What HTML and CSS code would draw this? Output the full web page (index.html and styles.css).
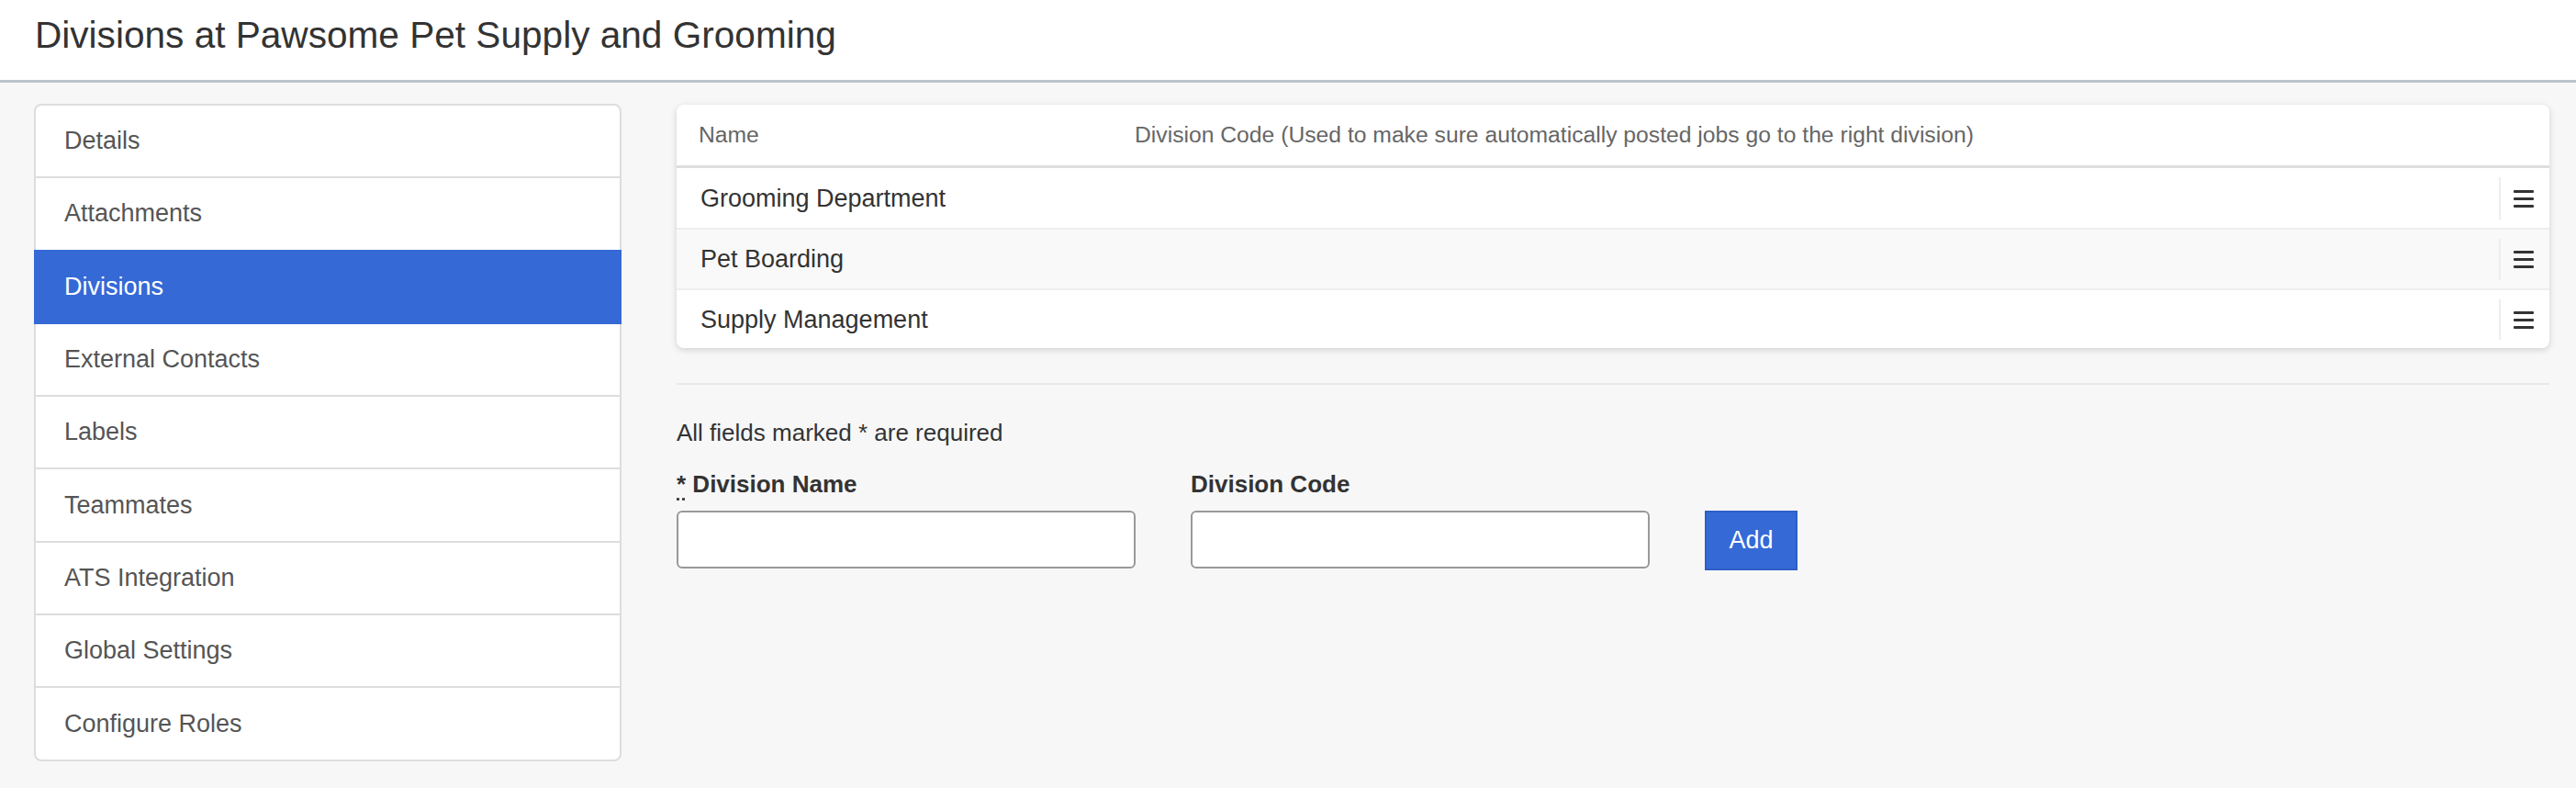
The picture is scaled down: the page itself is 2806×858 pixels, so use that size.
FILE: index.html
```html
<!DOCTYPE html>
<html lang="en">
<head>
<meta charset="utf-8">
<title>Divisions</title>
<link rel="stylesheet" href="styles.css">
</head>
<body>
<header class="topbar">
  <h1 class="title">Divisions at Pawsome Pet Supply and Grooming</h1>
</header>
<div class="layout">
  <nav class="sidebar">
    <a class="nav-item">Details</a>
    <a class="nav-item">Attachments</a>
    <a class="nav-item active">Divisions</a>
    <a class="nav-item">External Contacts</a>
    <a class="nav-item">Labels</a>
    <a class="nav-item">Teammates</a>
    <a class="nav-item">ATS Integration</a>
    <a class="nav-item">Global Settings</a>
    <a class="nav-item">Configure Roles</a>
  </nav>
  <main class="main">
    <div class="card">
      <div class="thead">
        <div class="col-name">Name</div>
        <div class="col-code">Division Code (Used to make sure automatically posted jobs go to the right division)</div>
      </div>
      <div class="row first">
        <div class="col-name">Grooming Department</div>
        <div class="col-code"></div>
        <div class="col-act"><span class="burger"><i></i><i></i><i></i></span></div>
      </div>
      <div class="row alt">
        <div class="col-name">Pet Boarding</div>
        <div class="col-code"></div>
        <div class="col-act"><span class="burger"><i></i><i></i><i></i></span></div>
      </div>
      <div class="row last">
        <div class="col-name">Supply Management</div>
        <div class="col-code"></div>
        <div class="col-act"><span class="burger"><i></i><i></i><i></i></span></div>
      </div>
    </div>
    <hr class="divider">
    <p class="note">All fields marked * are required</p>
    <form class="form">
      <div class="field">
        <label class="label"><abbr class="req" title="required">*</abbr> Division Name</label>
        <input class="input" type="text">
      </div>
      <div class="field">
        <label class="label">Division Code</label>
        <input class="input" type="text">
      </div>
      <button class="btn" type="button">Add</button>
    </form>
  </main>
</div>
</body>
</html>
```
FILE: styles.css
```css
* { box-sizing: border-box; }
html, body { margin: 0; padding: 0; }
body {
  background: #f7f7f7;
  font-family: "Liberation Sans", Arial, sans-serif;
  color: #333;
  width: 2806px;
  height: 858px;
  overflow: hidden;
}
.topbar {
  background: #fff;
  height: 90px;
  border-bottom: 3px solid #bcc3ca;
  padding: 15px 0 0 38px;
}
.title {
  margin: 0;
  font-weight: normal;
  font-size: 40.6px;
  line-height: 47px;
  color: #333;
}
.layout {
  display: flex;
  gap: 60px;
  padding: 23px 29px 0 37px;
  align-items: flex-start;
}
.sidebar {
  width: 640px;
  flex: none;
  background: #fff;
  border: 2px solid #ddd;
  border-radius: 8px;
  display: flex;
  flex-direction: column;
}
.nav-item {
  display: flex;
  align-items: center;
  height: 79.3px;
  padding-left: 31px;
  font-size: 27px;
  color: #555;
  border-bottom: 2px solid #ddd;
}
.nav-item:last-child { border-bottom: none; height: 77.5px; }
.nav-item.active {
  background: #3569d6;
  color: #fff;
  margin: -2px -2px 0 -2px;
  height: 81.3px;
  padding-left: 33px;
  border-bottom: none;
}
.main {
  flex: 1;
  min-width: 0;
  padding-top: 1px;
}
.card {
  background: #fff;
  border-radius: 8px;
  box-shadow: 0 2px 7px rgba(0,0,0,0.16);
}
.thead {
  display: flex;
  align-items: center;
  height: 69px;
  border-bottom: 3px solid #ddd;
  font-size: 24.7px;
  color: #666;
}
.col-name { width: 499px; padding-left: 24px; flex: none; }
.col-code { flex: 1; }
.row {
  display: flex;
  align-items: center;
  height: 66px;
  border-bottom: 2px solid #eee;
  font-size: 27px;
  color: #333;
  padding-top: 1px;
}
.row.first { height: 67px; }
.row .col-name { padding-left: 26px; }
.row.alt { background: #f9f9f9; }
.row.last { border-bottom: none; height: 63px; border-radius: 0 0 8px 8px; }
.col-act {
  width: 55px;
  flex: none;
  align-self: stretch;
  display: flex;
  align-items: center;
  justify-content: center;
  margin: 9px 0;
  border-left: 2px solid #eee;
  padding-right: 3px;
}
.burger {
  display: flex;
  flex-direction: column;
  gap: 5px;
  width: 22px;
}
.burger i {
  display: block;
  height: 3px;
  background: #333;
  border-radius: 1px;
}
.divider {
  margin: 38px 0 0 0;
  border: none;
  border-top: 2px solid #e8e8e8;
  height: 0;
}
.note {
  margin: 34px 0 0 0;
  font-size: 26px;
  line-height: 36px;
  color: #333;
}
.form {
  display: flex;
  align-items: flex-end;
  gap: 60px;
  margin-top: 20px;
}
.field {
  display: flex;
  flex-direction: column;
  gap: 11px;
  width: 500px;
}
.label {
  font-weight: bold;
  font-size: 26px;
  line-height: 36px;
  color: #333;
}
.req {
  text-decoration: underline dotted;
  text-underline-offset: 6px;
}
.input {
  height: 63px;
  width: 500px;
  border: 2px solid #999;
  border-radius: 6px;
  background: #fff;
  font-size: 26px;
  font-family: inherit;
}
.btn {
  width: 101px;
  height: 65px;
  margin-bottom: -2px;
  background: #3569d6;
  border: 2px solid #2f5fc6;
  color: #fff;
  font-size: 27px;
  font-family: inherit;
  padding: 0;
}
```
